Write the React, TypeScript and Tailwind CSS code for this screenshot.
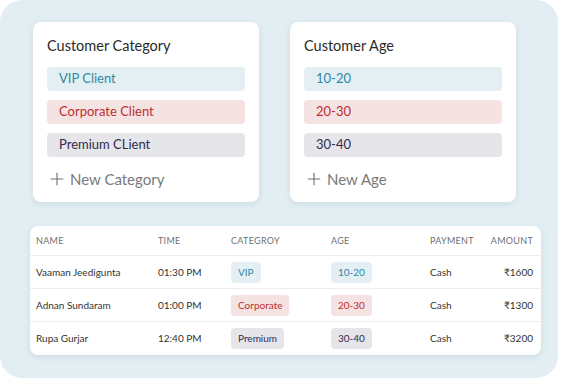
import { Plus } from "lucide-react";

type Tone = "blue" | "red" | "gray";

const toneClass: Record<Tone, string> = {
  blue: "bg-[#e3eff3] text-[#2e87a6]",
  red: "bg-[#f5e3e3] text-[#c02d2d]",
  gray: "bg-[#e5e5ea] text-[#2f2c50]",
};

const categories: { label: string; tone: Tone }[] = [
  { label: "VIP Client", tone: "blue" },
  { label: "Corporate Client", tone: "red" },
  { label: "Premium CLient", tone: "gray" },
];

const ages: { label: string; tone: Tone }[] = [
  { label: "10-20", tone: "blue" },
  { label: "20-30", tone: "red" },
  { label: "30-40", tone: "gray" },
];

const rows: {
  name: string;
  time: string;
  category: string;
  catTone: Tone;
  age: string;
  payment: string;
  amount: string;
}[] = [
  { name: "Vaaman Jeedigunta", time: "01:30 PM", category: "VIP", catTone: "blue", age: "10-20", payment: "Cash", amount: "₹1600" },
  { name: "Adnan Sundaram", time: "01:00 PM", category: "Corporate", catTone: "red", age: "20-30", payment: "Cash", amount: "₹1300" },
  { name: "Rupa Gurjar", time: "12:40 PM", category: "Premium", catTone: "gray", age: "30-40", payment: "Cash", amount: "₹3200" },
];

function OptionCard({
  title,
  items,
  addLabel,
}: {
  title: string;
  items: { label: string; tone: Tone }[];
  addLabel: string;
}) {
  return (
    <div className="flex h-[180px] w-[226px] flex-col rounded-[8px] bg-white px-[14px] pt-[14px] shadow-[0_2px_6px_rgba(60,90,110,0.12)]">
      <h2 className="text-[14.5px] leading-[20px] text-[#2b2b2b]">{title}</h2>
      <div className="mt-[11px] flex flex-col gap-[9px]">
        {items.map((item) => (
          <div
            key={item.label}
            className={`flex h-[24px] items-center rounded-[4px] pl-[12px] text-[13px] ${toneClass[item.tone]}`}
          >
            {item.label}
          </div>
        ))}
      </div>
      <div className="mt-[12px] flex items-center gap-[3px] text-[15px] leading-[20px] text-[#7a7a7a]">
        <Plus size={20} strokeWidth={1.3} className="text-[#6f6f6f]" />
        {addLabel}
      </div>
    </div>
  );
}

function Badge({ tone, children }: { tone: Tone; children: string }) {
  return (
    <span
      className={`inline-flex h-[21px] items-center rounded-[4px] px-[7px] text-[10px] ${toneClass[tone]}`}
    >
      {children}
    </span>
  );
}

const cols = "grid grid-cols-[122px_73px_100px_99px_1fr_auto] items-center pl-[6px] pr-[8px]";

export default function App() {
  return (
    <div
      className="h-[380px] w-[561px] bg-white"
      style={{ fontFamily: "Lato, 'Noto Sans', sans-serif" }}
    >
      <div className="flex h-[378px] w-[558px] flex-col rounded-[22px] bg-[#e2eef2] pl-[30px] pt-[22px]">
        <div className="flex gap-[31px] pl-[3px]">
          <OptionCard title="Customer Category" items={categories} addLabel="New Category" />
          <OptionCard title="Customer Age" items={ages} addLabel="New Age" />
        </div>

        <div className="mt-[24px] w-[511px] overflow-hidden rounded-[8px] bg-white shadow-[0_2px_6px_rgba(60,90,110,0.12)]">
          <div className={`${cols} h-[30px] border-b border-[#eeeeee] text-[9px] uppercase tracking-[0.3px] text-[#6f6f6f]`}>
            <span>Name</span>
            <span>Time</span>
            <span>Categroy</span>
            <span>Age</span>
            <span>Payment</span>
            <span className="text-right">Amount</span>
          </div>
          {rows.map((r, i) => (
            <div
              key={r.name}
              className={`${cols} h-[33px] text-[10px] text-[#333] ${i < rows.length - 1 ? "border-b border-[#eeeeee]" : ""}`}
            >
              <span>{r.name}</span>
              <span>{r.time}</span>
              <span>
                <Badge tone={r.catTone}>{r.category}</Badge>
              </span>
              <span>
                <Badge tone={r.catTone}>{r.age}</Badge>
              </span>
              <span>{r.payment}</span>
              <span className="text-right">{r.amount}</span>
            </div>
          ))}
        </div>
      </div>
    </div>
  );
}
